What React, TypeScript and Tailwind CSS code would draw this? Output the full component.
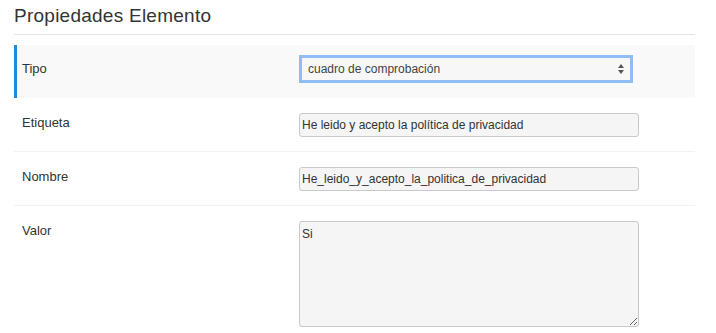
const FONT = "font-['Liberation_Sans','Helvetica_Neue',Arial,sans-serif]"

const TEXT_ROWS = [
  { label: 'Etiqueta', value: 'He leido y acepto la política de privacidad' },
  { label: 'Nombre', value: 'He_leido_y_acepto_la_politica_de_privacidad' },
]

export default function App() {
  return (
    <div className={`${FONT} min-h-screen bg-white pl-[14px] pr-[21px] text-[#333]`}>
      {/* ── Header ── */}
      <h2 className="pt-[4px] pb-[6px] border-b border-[#e5e5e5] text-[19px] leading-[24px] tracking-[0.25px] font-normal text-[#333]">
        Propiedades Elemento
      </h2>

      <div className="mt-[10px]">
        {/* ── Tipo (active row) ── */}
        <div className="flex h-[53px] bg-[#f9f9f9] border-l-[3px] border-[#1a8ddd] pl-[5px]">
          <div className="w-[277px] pt-[14px] text-[13px] leading-[19px]">Tipo</div>
          <div className="pt-[10px]">
            <div className="flex items-center justify-between w-[334px] h-[28px] border-[3px] border-[#8fbdf6] bg-[#f7f7f7] pl-[6px] pr-[6px] text-[12px] text-[#444]">
              <span>cuadro de comprobación</span>
              <svg width="6" height="10" viewBox="0 0 6 10" className="fill-[#555]">
                <path d="M3 0 L6 4 L0 4 Z" />
                <path d="M0 6 L6 6 L3 10 Z" />
              </svg>
            </div>
          </div>
        </div>

        {/* ── Text rows ── */}
        {TEXT_ROWS.map((row) => (
          <div key={row.label} className="flex h-[54px] border-b border-[#f2f2f2] pl-[8px]">
            <div className="w-[277px] pt-[15px] text-[13px] leading-[19px]">{row.label}</div>
            <div className="pt-[15px]">
              <input
                readOnly
                value={row.value}
                className={`${FONT} block w-[340px] h-[24px] rounded-[3px] border border-[#c9c9c9] bg-[#f5f5f5] px-[2px] text-[12px] text-[#333] outline-none`}
              />
            </div>
          </div>
        ))}

        {/* ── Valor ── */}
        <div className="flex pl-[8px]">
          <div className="w-[277px] pt-[15px] text-[13px] leading-[19px]">Valor</div>
          <div className="pt-[15px]">
            <textarea
              readOnly
              value="Si"
              className={`${FONT} block w-[340px] h-[106px] rounded-[3px] border border-[#c9c9c9] bg-[#f5f5f5] px-[2px] pt-[3px] text-[12px] text-[#333] outline-none resize`}
            />
          </div>
        </div>
      </div>
    </div>
  )
}
